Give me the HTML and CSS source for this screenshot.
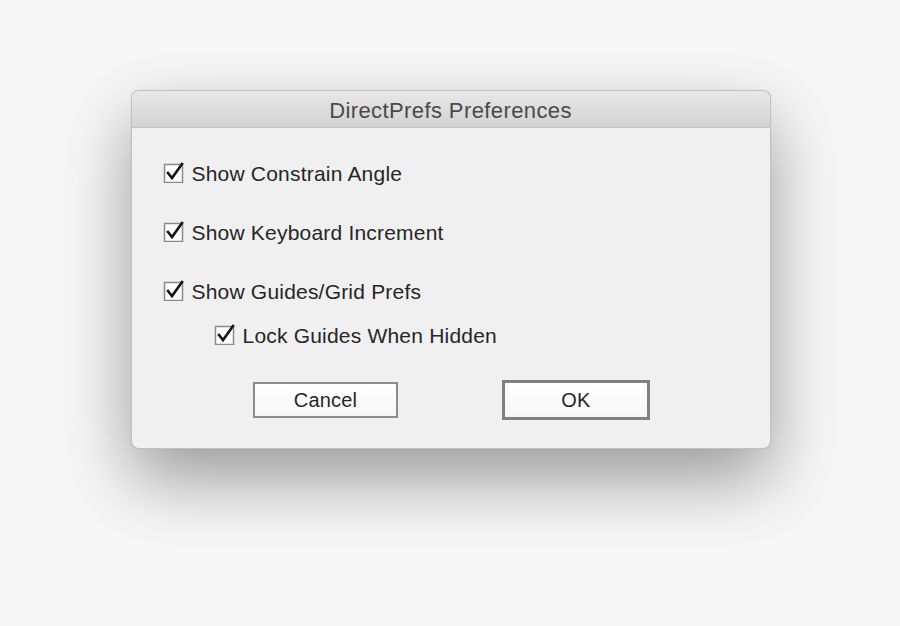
FILE: index.html
```html
<!DOCTYPE html>
<html lang="en">
<head>
    <meta charset="UTF-8">
    <title>DirectPrefs Preferences</title>
    <link rel="stylesheet" href="styles.css">
</head>
<body>
    <div class="dialog">
        <div class="titlebar">DirectPrefs Preferences</div>
        <div class="content">
            <label class="option">
                <svg class="check" viewBox="0 0 22 22"><rect x="1.5" y="3.5" width="18" height="18" /><path d="M5 12 L9 17 L19 3" /></svg>
                <span>Show Constrain Angle</span>
            </label>
            <label class="option">
                <svg class="check" viewBox="0 0 22 22"><rect x="1.5" y="3.5" width="18" height="18" /><path d="M5 12 L9 17 L19 3" /></svg>
                <span>Show Keyboard Increment</span>
            </label>
            <label class="option">
                <svg class="check" viewBox="0 0 22 22"><rect x="1.5" y="3.5" width="18" height="18" /><path d="M5 12 L9 17 L19 3" /></svg>
                <span>Show Guides/Grid Prefs</span>
            </label>
            <label class="option sub">
                <svg class="check" viewBox="0 0 22 22"><rect x="1.5" y="3.5" width="18" height="18" /><path d="M5 12 L9 17 L19 3" /></svg>
                <span>Lock Guides When Hidden</span>
            </label>
            <div class="buttons">
                <button class="btn cancel-btn">Cancel</button>
                <button class="btn ok-btn">OK</button>
            </div>
        </div>
    </div>
</body>
</html>
```

FILE: styles.css
```css
* {
    margin: 0;
    padding: 0;
    box-sizing: border-box;
    font-family: 'Liberation Sans', Arial, sans-serif;
}

body {
    background-color: #f7f7f7;
    display: flex;
    justify-content: center;
    padding-top: 90px;
    padding-left: 1px;
    min-height: 626px;
    overflow: hidden;
}

.dialog {
    width: 640px;
    height: 359px;
    background-color: #f0f0f0;
    border: 1px solid #c2c2c2;
    border-radius: 8px;
    box-shadow: 0 30px 70px rgba(0, 0, 0, 0.38), 0 0 1px rgba(0, 0, 0, 0.2);
    overflow: hidden;
}

.titlebar {
    height: 37px;
    background: linear-gradient(#e8e8e8, #d3d3d3);
    border-bottom: 1px solid #c4c4c4;
    color: #4a4a4a;
    font-size: 22px;
    letter-spacing: 0.4px;
    line-height: 40px;
    text-align: center;
}

.content {
    display: flex;
    flex-direction: column;
    padding: 34px 0 0 31px;
}

.option {
    display: flex;
    align-items: center;
    height: 24px;
    color: #262626;
    font-size: 21px;
    letter-spacing: 0.2px;
}

.option + .option {
    margin-top: 35px;
}

.option.sub {
    margin-top: 20px;
    margin-left: 51px;
}

.check {
    width: 22px;
    height: 22px;
    margin-right: 7px;
    margin-top: -4px;
}

.check rect {
    fill: #ffffff;
    stroke: #8a8a8a;
    stroke-width: 1.5;
}

.check path {
    fill: none;
    stroke: #141414;
    stroke-width: 2.6;
    stroke-linecap: square;
    stroke-linejoin: miter;
}

.buttons {
    display: flex;
    align-items: center;
    justify-content: center;
    gap: 104px;
    margin-top: 32px;
    margin-left: -31px;
    padding-left: 2px;
}

.btn {
    background: linear-gradient(#ffffff, #f7f7f7);
    color: #262626;
    font-size: 20px;
    letter-spacing: 0.2px;
    cursor: pointer;
}

.cancel-btn {
    width: 145px;
    height: 36px;
    border: 2px solid #8c8c8c;
}

.ok-btn {
    width: 148px;
    height: 40px;
    border: 3px solid #808080;
}
```
